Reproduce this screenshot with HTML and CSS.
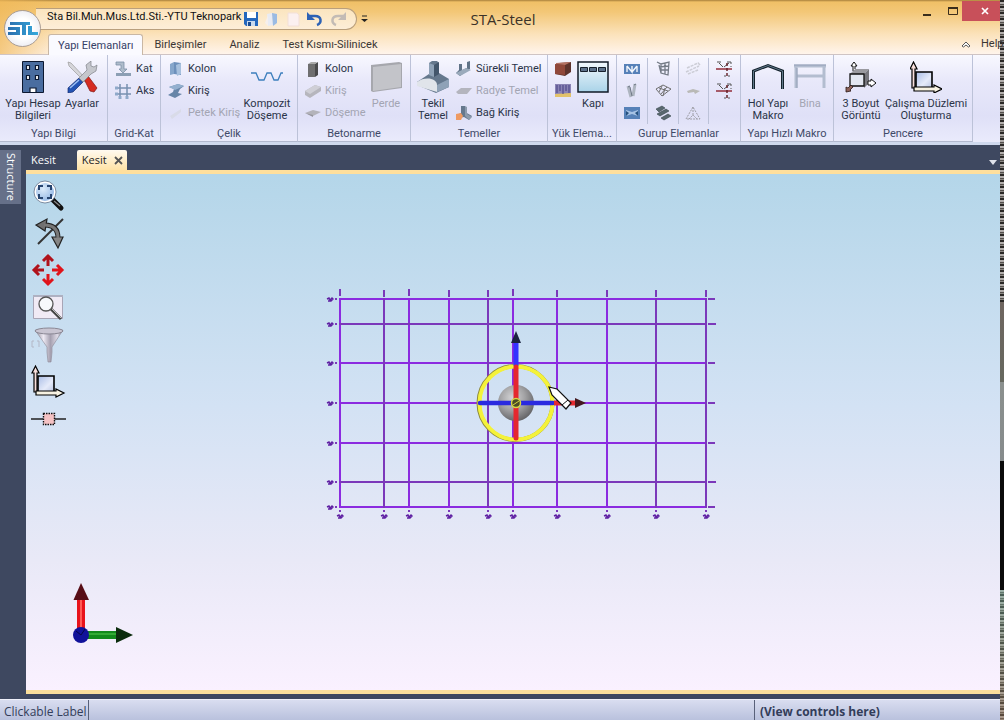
FILE: index.html
```html
<!DOCTYPE html>
<html lang="tr">
<head>
<meta charset="utf-8">
<title>STA-Steel</title>
<link rel="stylesheet" href="styles.css">
</head>
<body>
<svg class="defs" aria-hidden="true">
  <defs>
    <linearGradient id="pane" x1="0" y1="0" x2="1" y2="1"><stop offset="0" stop-color="#a9bde6"/><stop offset=".6" stop-color="#e6ebfa"/><stop offset="1" stop-color="#b9c4e2"/></linearGradient>
    <linearGradient id="logo" x1="0" y1="0" x2="1" y2="0"><stop offset="0" stop-color="#2b6fae"/><stop offset="1" stop-color="#35a9dc"/></linearGradient>
    <linearGradient id="metal" x1="0" y1="0" x2="1" y2="0"><stop offset="0" stop-color="#8b8794"/><stop offset=".3" stop-color="#eeeaf4"/><stop offset=".55" stop-color="#a5a0b0"/><stop offset=".8" stop-color="#dedae6"/><stop offset="1" stop-color="#85808c"/></linearGradient>
    <linearGradient id="door" x2="0" y2="1"><stop offset="0" stop-color="#f2f8fd"/><stop offset="1" stop-color="#a9d3e8"/></linearGradient>
    <radialGradient id="ball" cx=".4" cy=".35" r=".7"><stop offset="0" stop-color="#d4d4d6"/><stop offset=".5" stop-color="#a2a2a4"/><stop offset="1" stop-color="#5f5f62"/></radialGradient>
    <radialGradient id="lens" cx=".4" cy=".35" r=".7"><stop offset="0" stop-color="#dcebfa"/><stop offset="1" stop-color="#8db2e2"/></radialGradient>
    <g id="axes">
      <path d="M6 11h16v16H6z" fill="url(#pane)" stroke="#000" stroke-width="1.600"/>
      <path d="M2 27V8H0L3.500 1 7 8H5v19z" fill="#f7dfdc" stroke="#000" stroke-width="1.200"/>
      <path d="M4 26h20v-2l8 4-8 4v-2H4z" fill="#f7f2e2" stroke="#000" stroke-width="1.200"/>
    </g>
    <g id="section"><path d="M0 8h16" stroke="#8c1f2c" stroke-width="1.400"/><path d="M3 2l4 4M8 6l5-4M1 1h4M11 1h4" fill="none" stroke="#555"/><path d="M11 2v14" stroke="#611a20" stroke-width="1.400" stroke-dasharray="3 2"/><path d="M8 15h8M15 1v5" stroke="#555" stroke-dasharray="2 2"/></g>
  </defs>
</svg>
<div class="screen">
<div class="window">
  <header class="header">
    <button class="app-button" aria-label="STA">
      <svg width="32" height="18" viewBox="0 0 32 18"><path d="M3 2h20v3h-4v10h-4V5H3zM1 7h12v8H1v-3h8v-2H1zM21 6h4v6h6v3H21z" fill="url(#logo)"/></svg>
    </button>
    <div class="quick">
      <span class="quick-text">Sta Bil.Muh.Mus.Ltd.Sti.-YTU Teknopark</span>
      <button aria-label="Kaydet"><svg width="16" height="16"><path d="M1 1h14v14H3l-2-2z" fill="#2467bd"/><path d="M4 1h9v6H4z" fill="#fff"/><path d="M4 10h8v5H4z" fill="#c8d9ee"/><path d="M5 11h3v4H5z" fill="#194a90"/></svg></button>
      <button aria-label="Aç"><svg width="16" height="16"><path d="M3 3l5-1 1 12-5 1z" fill="#e8ebf4"/><path d="M8 2l5 1v9l-4 3z" fill="#9bbbe3"/><path d="M1 12l3-8v11z" fill="#f6efec"/></svg></button>
      <button aria-label="Yeni"><svg width="16" height="16"><path d="M3 2h9l2 2v11H3z" fill="#fbf0f0" stroke="#f2dfd8"/></svg></button>
      <button aria-label="Geri al"><svg width="18" height="16"><path d="M4 5h5c7 0 7 7 2 9" fill="none" stroke="#2d62b5" stroke-width="2.500"/><path d="M1 1v8h8z" fill="#2d62b5"/></svg></button>
      <button aria-label="Yinele"><svg width="18" height="16"><path d="M14 5H9c-7 0-7 7-2 9" fill="none" stroke="#c3bbb5" stroke-width="2.500"/><path d="M17 1v8H9z" fill="#c3bbb5"/></svg></button>
    </div>
    <button class="quick-more" aria-label="Daha fazla"><svg width="7" height="8"><path d="M1 1h5" stroke="#222"/><path d="M0 4h7L3.500 7z" fill="#222"/></svg></button>
    <h1 class="title">STA-Steel</h1>
    <div class="win-buttons">
      <button aria-label="Simge durumu"><svg width="8" height="12"><path d="M0 9h8v2H0z" fill="#3a2d1c"/></svg></button>
      <button aria-label="Ekranı kapla"><svg width="10" height="9"><path d="M.5.500h9v7h-9z" fill="none" stroke="#3a2d1c"/><path d="M0 0h10v2H0z" fill="#3a2d1c"/></svg></button>
      <button class="close" aria-label="Kapat"><svg width="8" height="8"><path d="M1 1l6 6M7 1L1 7" stroke="#fff" stroke-width="1.700"/></svg></button>
    </div>
    <nav class="tabs">
      <button class="tab active">Yapı Elemanları</button>
      <button class="tab">Birleşimler</button>
      <button class="tab">Analiz</button>
      <button class="tab">Test Kısmı-Silinicek</button>
      <button class="fold" aria-label="Şeridi daralt"><svg width="10" height="7"><path d="M1 5L5 1l4 4-1.500 1L5 4 2.500 6z" fill="#fff" stroke="#444" stroke-width=".9"/></svg></button>
      <button class="help">Help</button>
    </nav>
  </header>

  <section class="ribbon">
    <div class="group g-bilgi">
      <div class="items">
        <button class="large w58"><svg width="32" height="32"><path d="M5.500.500h21v31h-21z" fill="#4a6da0" stroke="#0c1830"/><path d="M9.500 4.500h3v4h-3zM18.500 4.500h3v4h-3zM9.500 14.500h3v4h-3zM18.500 14.500h3v4h-3zM13 27h6v4.500h-6z" fill="#fff" stroke="#0c1830" stroke-width="1.200"/></svg><span>Yapı Hesap Bilgileri</span></button>
        <button class="large w40"><svg width="32" height="32"><path d="M2 1l3 1 16 17-2 2L3 5z" fill="#d6d6da" stroke="#999" stroke-width=".7"/><path d="M18 18l4-3 9 12-3 4-4-1z" fill="#d62c22" stroke="#801512" stroke-width=".7"/><path d="M13 17l4 4L7 31l-5 1v-5z" fill="#2353b4" stroke="#152c70" stroke-width=".7"/><path d="M13 17l8-8-1-5 5-4v5l3 1 3-2-1 6-5 3-8 8z" fill="#c5c7cd" stroke="#80828a" stroke-width=".7"/><path d="M4 27l9-8" stroke="#9fc0f4" stroke-width="1.500"/></svg><span>Ayarlar</span></button>
      </div>
      <h2>Yapı Bilgi</h2>
    </div>
    <div class="group g-grid">
      <div class="items">
        <div class="stack">
          <button><svg width="17" height="16"><path d="M1 1h8v7h3l-4 4-4-4h2V4H1z" fill="#aebccb" stroke="#7c90a6" stroke-width=".8"/><path d="M1 12h15v3H1z" fill="#8c9fb4"/></svg>Kat</button>
          <button><svg width="17" height="16"><path d="M5 1v14M12 1v14M1 5h15M1 11h15" stroke="#7790b0" stroke-width="1.500"/><path d="M0 5h3M0 11h3M5 13v3M12 13v3" stroke="#8fa9ca" stroke-width="3"/></svg>Aks</button>
        </div>
      </div>
      <h2>Grid-Kat</h2>
    </div>
    <div class="group g-celik">
      <div class="items">
        <div class="stack">
          <button><svg width="16" height="16"><path d="M2 3l4-2v12l-4 1z" fill="#86a6cb"/><path d="M6 1l7 1v12l-7-1z" fill="#6d90bb"/><path d="M8 4l5-2v11l-4 2z" fill="#a7c0dd"/></svg>Kolon</button>
          <button><svg width="16" height="16"><path d="M1 4l9-3 6 2-4 3-2 4 4 1-7 4-7-3 5-3 1-3z" fill="#6785a8"/><path d="M1 4l9-3 6 2-9 4z" fill="#94b0cf"/></svg>Kiriş</button>
          <button disabled><svg width="16" height="16"><path d="M2 11L13 4v3L4 14z" fill="#d9dbe8"/></svg>Petek Kiriş</button>
        </div>
        <button class="large w52"><svg width="32" height="32"><path d="M0 12h5l3 7h5l3-7h4l3 7h4l3-7h2" fill="none" stroke="#3d7fbd" stroke-width="1.300"/></svg><span>Kompozit Döşeme</span></button>
      </div>
      <h2>Çelik</h2>
    </div>
    <div class="group g-beton">
      <div class="items">
        <div class="stack">
          <button><svg width="16" height="16"><path d="M3 3l3-2h6l-2 2z" fill="#a9a9a9"/><path d="M3 3h7v13H3z" fill="#6f6f70"/><path d="M10 3l3-2v13l-3 2z" fill="#49494b"/></svg>Kolon</button>
          <button disabled><svg width="16" height="16"><path d="M0 8l10-6 6 2v4L5 15l-5-3z" fill="#b6b6bd"/><path d="M0 8l10-6 6 2L5 11z" fill="#cfcfd6"/></svg>Kiriş</button>
          <button disabled><svg width="16" height="16"><path d="M0 8l8-3 8 2-8 4z" fill="#b3b3ba"/><path d="M0 8l8 2v2z" fill="#95959c"/></svg>Döşeme</button>
        </div>
        <button class="large w40" disabled><svg width="32" height="32"><path d="M1 4l28-3 3 1v25L3 31l-2-1z" fill="#a6a7ad"/><path d="M3 6l28-3v23L3 30z" fill="#c3c4c9"/></svg><span>Perde</span></button>
      </div>
      <h2>Betonarme</h2>
    </div>
    <div class="group g-temel">
      <div class="items">
        <button class="large w36"><svg width="32" height="32"><path d="M0 21l12-8V2l3-2h5l2 2v10l10 6v8l-13 6-19-8z" fill="#65788d"/><path d="M0 21c8-6 20-4 20 3v7L0 25z" fill="#e0e4ea"/><path d="M12 2l5 2v12l-5-2zM32 18l-12 6v7l12-5z" fill="#8fa2b7"/><path d="M17 4l5-3v12l-5 3z" fill="#43566b"/></svg><span>Tekil Temel</span></button>
        <div class="stack">
          <button><svg width="16" height="16"><path d="M3 3h3v6l5-2V1l3-1v8L4 15l-4-3 3-3z" fill="#607388"/><path d="M0 12l10-5 5 2L4 15z" fill="#9babbc"/></svg>Sürekli Temel</button>
          <button disabled><svg width="16" height="16"><path d="M0 9l5-4h11l-5 6H2z" fill="#b4b5be"/></svg>Radye Temel</button>
          <button><svg width="16" height="16"><path d="M5 1h4v6l7 4-3 4-5-3-5 1V9l2-1z" fill="#65788d"/><path d="M9 1l2 1v7l5 3-3 3-4-4z" fill="#8c9aac"/><path d="M0 9l5-1 2 3-2 4H0z" fill="#ee9a62"/></svg>Bağ Kiriş</button>
        </div>
      </div>
      <h2>Temeller</h2>
    </div>
    <div class="group g-yuk">
      <div class="items">
        <div class="stack">
          <button aria-label="Duvar yükü"><svg width="16" height="16"><path d="M0 4l4-2 12-1v10l-6 4-10-2z" fill="#5d332c"/><path d="M0 3l10 1v10L0 13z" fill="#90483a"/><path d="M1 2l15-1-6 3-9-1z" fill="#b57263"/></svg></button>
          <button aria-label="Yayılı yük"><svg width="16" height="16"><path d="M0 1h16v13H0z" fill="#8a83b4"/><path d="M0 11l16-1v4H0z" fill="#e2c26a"/><path d="M2 2v8M5 2v6M8 2v9M11 2v6M14 2v8" stroke="#453e83"/></svg></button>
        </div>
        <button class="large w32"><svg width="32" height="32"><path d="M1 1h30v30H1z" fill="url(#door)" stroke="#111a26" stroke-width="1.500"/><path d="M3.500 6.500h7v4h-7zM12.500 6.500h7v4h-7zM21.500 6.500h7v4h-7z" fill="#5c7089" stroke="#17202c"/></svg><span>Kapı</span></button>
      </div>
      <h2>Yük Elema...</h2>
    </div>
    <div class="group g-gurup">
      <div class="items columns">
        <div class="stack">
          <button aria-label="Makas"><svg width="16" height="16"><path d="M0 3h16v10H0z" fill="#5681b8"/><path d="M3 5v6M3 5l5 6V5M13 5v6M13 5l-5 6" fill="none" stroke="#f2f6fc" stroke-width="1.400"/></svg></button>
          <button aria-label="Çapraz"><svg width="16" height="16"><path d="M4 3l3 11M11 1L9 13" stroke="#aeb5c0" stroke-width="3" fill="none"/><path d="M6 4l2 9M4 4l2-1M10 2l2-1" stroke="#6d7683" stroke-width="1" fill="none"/></svg></button>
          <button aria-label="Kiriş grubu"><svg width="16" height="16"><path d="M0 2h16v12H0z" fill="#5681b8"/><path d="M2 5l6 2 6-2v6l-6-2-6 2z" fill="#a6c2e4"/><path d="M2 6l3 2-3 3M14 6l-3 2 3 3" fill="#26517f"/></svg></button>
        </div>
        <div class="stack">
          <button aria-label="Cephe"><svg width="16" height="16"><path d="M2 1l4 2 8-2-1 13-7-2-2-8M6 3v9M10 2v11M4 6l10-1M5 9h9" fill="none" stroke="#747b86" stroke-width="1.300"/></svg></button>
          <button aria-label="Çatı"><svg width="16" height="16"><path d="M1 6l7-4 8 4-9 7zM4 5l9 3M7 3l-3 6M12 4L6 11M10 5l-2 8" fill="none" stroke="#6f6f6f"/></svg></button>
          <button aria-label="Aşık"><svg width="16" height="16"><path d="M1 4l6-3 3 2-6 4zM2 9l9-5 3 2-9 5zM6 13l7-4 3 2-7 4z" fill="#59686f" stroke="#38464c" stroke-width=".6"/></svg></button>
        </div>
        <div class="stack">
          <button aria-label="Kuşak" disabled><svg width="16" height="16"><path d="M2 7l11-5 2 2M1 11l13-6M3 13l10-4" stroke="#cccdd6" stroke-width="1.500" stroke-dasharray="3 1" fill="none"/></svg></button>
          <button aria-label="Mahya" disabled><svg width="16" height="16"><path d="M2 8l6-2 7 2-5 3-1-2-6 1z" fill="#b9b9b6"/></svg></button>
          <button aria-label="Üçgen" disabled><svg width="16" height="16"><path d="M8 2L1 14h14zM8 2v8M4 14l4-4 4 4" fill="none" stroke="#9c9ca4" stroke-dasharray="2 1"/></svg></button>
        </div>
        <div class="stack">
          <button aria-label="Kesit 1"><svg width="17" height="16"><use href="#section"/></svg></button>
          <button aria-label="Kesit 2"><svg width="17" height="16"><use href="#section"/></svg></button>
        </div>
      </div>
      <h2>Gurup Elemanlar</h2>
    </div>
    <div class="group g-makro">
      <div class="items">
        <button class="large w46"><svg width="32" height="32"><path d="M1.500 28V10L16 4.500 30.500 10v18" fill="none" stroke="#14222c" stroke-width="3"/><path d="M1.500 28V10L16 4.500 30.500 10v18" fill="none" stroke="#60788a" stroke-width="1"/></svg><span>Hol Yapı Makro</span></button>
        <button class="large w38" disabled><svg width="32" height="32"><path d="M2 5v22M30 5v22M0 5h32M2 15h28" fill="none" stroke="#b3bdd0" stroke-width="3"/><path d="M0 4h32M3 7v20" stroke="#8c98b0" stroke-width=".8"/></svg><span>Bina</span></button>
      </div>
      <h2>Yapı Hızlı Makro</h2>
    </div>
    <div class="group g-pencere">
      <div class="items">
        <button class="large w46"><svg width="32" height="32"><path d="M5 13l5-5h14l-5 5z" fill="#9a9a9f"/><path d="M19 13l5-5v14l-5 5z" fill="#77777d"/><path d="M5 13h14v12H5z" fill="#e3e7f1" stroke="#111" stroke-width="1.300"/><path d="M8 10V5H6l3-4 3 4h-2v3M23 20h3v-2l5 4-5 4v-2h-3z" fill="#fff" stroke="#111"/><path d="M6 24l-3 3-2-1v5l5-1-1-1 3-3z" fill="#8c625a" stroke="#2c1915" stroke-width=".8"/></svg><span>3 Boyut Görüntü</span></button>
        <button class="large w84"><svg width="32" height="32"><use href="#axes"/></svg><span>Çalışma Düzlemi Oluşturma</span></button>
      </div>
      <h2>Pencere</h2>
    </div>
  </section>

  <main class="workspace">
    <aside class="side"><button>Structure</button></aside>
    <section class="docs">
      <div class="doc-tabs">
        <button class="doc">Kesit</button>
        <button class="doc current">Kesit <svg width="9" height="9"><path d="M1 1l7 7M8 1L1 8" stroke="#555" stroke-width="1.800"/></svg></button>
        <button class="doc-menu" aria-label="Belgeler"><svg width="8" height="5"><path d="M0 0h8L4 5z" fill="#dfe2ea"/></svg></button>
      </div>
      <div class="canvas">
        <svg class="scene" viewBox="26 174 974 516">
          <g fill="none" stroke="#8b2be0" stroke-width="2">
            <path d="M340 298v210M409 298v210M449 298v210M513 298v210M557 298v210M607 298v210"/>
            <path d="M339 299h368M339 363h368M339 403h368M339 443h368M339 507h368"/>
          </g>
          <g fill="none" stroke="#7b38ba" stroke-width="2">
            <path d="M384 298v210M488 298v210M656 298v210M706 298v210M339 324h368M339 482h368"/>
            <path d="M340 289v7M384 290v7M409 289v7M449 290v7M488 290v7M513 289v7M557 290v7M607 290v7M656 290v7M706 290v7"/>
            <path d="M708 299h7M708 324h8M708 363h7M708 403h7M708 443h7M708 482h8M708 507h7"/>
            <path d="M335 299h2M335 324h2M335 363h2M335 403h2M335 443h2M335 482h2M335 507h2"/>
            <path d="M340 510v2M384 510v2M409 510v2M449 510v2M488 510v2M513 510v2M557 510v2M607 510v2M656 510v2M706 510v2"/>
          </g>
          <defs><path id="mark" d="M-3 0l2-1 1 2 2-2 1 1-2 2-3 0" fill="none" stroke="#5e1fa2" stroke-width="1.400"/></defs>
          <use href="#mark" x="330" y="299"/><use href="#mark" x="330" y="324"/><use href="#mark" x="330" y="363"/><use href="#mark" x="330" y="403"/><use href="#mark" x="330" y="443"/><use href="#mark" x="330" y="482"/><use href="#mark" x="330" y="507"/>
          <use href="#mark" x="340" y="516"/><use href="#mark" x="384" y="516"/><use href="#mark" x="409" y="516"/><use href="#mark" x="449" y="516"/><use href="#mark" x="488" y="516"/><use href="#mark" x="513" y="516"/><use href="#mark" x="557" y="516"/><use href="#mark" x="607" y="516"/><use href="#mark" x="656" y="516"/><use href="#mark" x="706" y="516"/>
          <circle cx="516" cy="403" r="18" fill="url(#ball)"/>
          <circle cx="515.500" cy="403" r="37" fill="none" stroke="#8e8a3c" stroke-width="4"/>
          <circle cx="516" cy="403" r="36.500" fill="none" stroke="#f4f23a" stroke-width="4"/>
          <path d="M516 366v-24" stroke="#3333ff" stroke-width="5"/>
          <path d="M511 343l5-12 5 12z" fill="#1b2340"/>
          <path d="M516 367v71" stroke="#e5282e" stroke-width="5" stroke-linecap="round"/>
          <path d="M480 403h73" stroke="#2a2ae0" stroke-width="4.500" stroke-linecap="round"/>
          <path d="M554 403h22" stroke="#e5282e" stroke-width="5"/>
          <path d="M575 398l11 5-11 5z" fill="#44191f"/>
          <circle cx="516" cy="403" r="4.500" fill="#4b4b26" stroke="#d9d840" stroke-width="1.500"/>
          <path d="M513 405l6-4" stroke="#d9d840"/>
          <path d="M549 387l8 2 14 14-5 6-14-14z" fill="#fff" stroke="#111" stroke-width="1.200"/>
          <path d="M568 400l-6 5" stroke="#111"/>
        </svg>
        <div class="tools">
          <button aria-label="Tümünü göster"><svg width="32" height="32"><path d="M20 19l9 9" stroke="#111" stroke-width="5" stroke-linecap="round"/><path d="M22 21l6 5" stroke="#888" stroke-width="1.300"/><circle cx="13" cy="12" r="10" fill="url(#lens)" stroke="#fff" stroke-width="2"/><circle cx="13" cy="12" r="11" fill="none" stroke="#62718a" stroke-width=".8"/><path d="M7 10V6h4M15 6h4v4M19 14v4h-4M11 18H7v-4" fill="none" stroke="#27446f" stroke-width="2"/></svg></button>
          <button aria-label="Döndür"><svg width="32" height="32"><path d="M6 27L31 2" stroke="#333" stroke-width="2"/><path d="M13 8c8 0 13 4 13 13" fill="none" stroke="#222" stroke-width="5"/><path d="M4 8l11-6-2 12z" fill="#707070" stroke="#222" stroke-width="1.200"/><path d="M20 20h11l-5 11z" fill="#858585" stroke="#222" stroke-width="1.200"/><path d="M12 8c9 0 14 4 14 13" fill="none" stroke="#777" stroke-width="3"/></svg></button>
          <button aria-label="Kaydır"><svg width="32" height="32"><path d="M16 12V2M11 7l5-5 5 5M12 16H2M7 11l-5 5 5 5" fill="none" stroke="#b0121b" stroke-width="3"/><path d="M16 20v10M11 25l5 5 5-5M20 16h10M25 11l5 5-5 5" fill="none" stroke="#e0141b" stroke-width="3"/></svg></button>
          <button aria-label="Pencere yakınlaştır"><svg width="32" height="32"><path d="M1.500 4.500h29v23h-29z" fill="#f0eaf5" stroke="#a8a5b6"/><path d="M1 4h30v2H1z" fill="#aeb1c2"/><path d="M19 18l10 10" stroke="#444" stroke-width="3"/><path d="M20 18l9 9" stroke="#bbb"/><circle cx="14" cy="13" r="7" fill="#f7f9fc" stroke="#555" stroke-width="1.300"/></svg></button>
          <button aria-label="Filtre"><svg width="32" height="34"><path d="M3 2h28L20 19v5l-1 10h-3l-1-10v-5z" fill="url(#metal)" stroke="#8a8794" stroke-width=".6"/><ellipse cx="17" cy="3" rx="14" ry="3" fill="#c9c5d2" stroke="#8a8794"/><path d="M2 13H0v6h2M5 13h2v6" fill="none" stroke="#b3b7c6"/></svg></button>
          <button aria-label="Çalışma düzlemi"><svg width="32" height="32"><use href="#axes"/></svg></button>
          <button aria-label="Düğüm"><svg width="34" height="32"><path d="M-1 17h12M22 17h12" stroke="#222" stroke-width="1.500"/><path d="M11.500 11.500h11v11h-11z" fill="#f5c2c4" stroke="#111" stroke-width="1.400" stroke-dasharray="1.500 1"/></svg></button>
        </div>
        <svg class="triad" width="60" height="62" viewBox="0 0 60 62">
          <path d="M9 49V16" stroke="#e8131b" stroke-width="8"/><path d="M9 49V16" stroke="#ff5a55" stroke-width="2"/><path d="M1.500 17L9 0l8 17z" fill="#570d16"/>
          <path d="M12 52h32" stroke="#128a1c" stroke-width="8"/><path d="M12 51h32" stroke="#33ab35" stroke-width="2"/><path d="M44 44l17 8-17 8z" fill="#0b2c0d"/>
          <circle cx="9" cy="52" r="8" fill="#11129a"/><path d="M4 48l5 4 4-6" stroke="#070745" fill="none"/>
        </svg>
      </div>
    </section>
  </main>

  <footer class="status">
    <span class="status-left">Clickable Label</span>
    <strong class="status-right">(View controls here)</strong>
  </footer>
</div>
<div class="edge"></div>
</div>
</body>
</html>
```
FILE: styles.css
```css
* { box-sizing: border-box; }
body {
  margin: 0;
  font-family: "Open Sans", "Noto Sans", sans-serif;
  font-size: 11px;
  line-height: 12px;
  color: #2b3448;
}
.defs { position: absolute; width: 0; height: 0; }
button {
  margin: 0;
  padding: 0;
  border: 0;
  background: none;
  font: inherit;
  color: inherit;
}
button:disabled { color: #a3a5b3; }
svg { display: block; flex: none; }
h1, h2 { margin: 0; font-weight: normal; }

.screen { display: flex; height: 100vh; overflow: hidden; }
.window { flex: 1; min-width: 0; display: flex; flex-direction: column; background: #3e4860; }
.edge {
  width: 4px;
  background:
    linear-gradient(transparent 42%, #6f6660 42%, #66685f 53%, #8b908e 53%, #868b8c 64%, #0a0a0a 64%, #0a0a0a 82%, transparent 82%),
    linear-gradient(transparent 82%, rgba(120, 180, 160, .4) 82%, rgba(160, 120, 90, .4)),
    repeating-linear-gradient(#2a2826 0 2px, #b2aeac 2px 4px, #55514e 4px 5px, #8c8884 5px 6px);
}

/* Title bar and ribbon tabs */
.header {
  position: relative;
  flex: none;
  display: grid;
  grid-template-columns: 357px auto 1fr auto;
  grid-template-rows: 34px 21px;
  background:
    linear-gradient(to right, rgba(240, 184, 88, .7), transparent 60px),
    linear-gradient(#a8803c 0, #f0c067 2px, #f3c777 12px, #fbe2ba 34px, #fff5ee 55px);
}
.app-button {
  position: absolute;
  left: 4px;
  top: 10px;
  width: 37px;
  height: 37px;
  display: grid;
  place-items: center;
  border: 1px solid #a89c94;
  border-radius: 50%;
  background: radial-gradient(#fff 40%, #dfe0ea);
}
.quick {
  display: flex;
  align-items: center;
  gap: 5px;
  height: 22px;
  margin: 8px 0 0 36px;
  padding-left: 11px;
  border: 1px solid #b99f7c;
  border-left: 0;
  border-radius: 0 11px 11px 0;
  background: linear-gradient(#fbe5bf, #fdeed8);
  color: #111;
}
.quick-text {
  width: 191px;
  padding-bottom: 4px;
  font-family: Roboto, "Open Sans", sans-serif;
  white-space: nowrap;
}
.quick-more { align-self: start; margin: 15px 0 0 4px; }
.title {
  position: absolute;
  left: 0;
  right: 0;
  margin-top: 10px;
  padding-left: 6px;
  font-size: 15px;
  line-height: 18px;
  text-align: center;
  color: #3b3228;
}
.win-buttons { grid-column: 4; display: flex; align-items: start; gap: 17px; height: 20px; margin-top: 1px; }
.win-buttons button { display: grid; place-items: center; height: 20px; }
.win-buttons .close { width: 38px; margin-left: -13px; padding-left: 8px; background: #c8505a; }
.win-buttons .close { margin-left: -13px; }
.tabs {
  grid-column: 1 / -1;
  display: flex;
  padding-left: 48px;
  border-bottom: 1px solid #cfc4c4;
  font-family: Roboto, "Open Sans", sans-serif;
}
.tab { padding: 2px 12px 0 11px; white-space: nowrap; color: #3a3634; }
.tab.active {
  margin-bottom: -1px;
  padding: 1px 9px 0;
  border: 1px solid #c9b7a4;
  border-bottom: 0;
  border-radius: 3px 3px 0 0;
  background: #fafaff;
  color: #354066;
}
.fold { margin-left: auto; }
.help { width: 29px; padding-left: 10px; text-align: left; color: #3a3634; }

/* Ribbon */
.ribbon {
  flex: none;
  display: flex;
  height: 90px;
  border-bottom: 3px solid #cfd9ee;
  background: linear-gradient(#f8f8ff, #e8e8fa 30%, #dfe0f7 70%, #eaebfc);
  font-family: Roboto, "Open Sans", sans-serif;
}
.group {
  flex: none;
  display: flex;
  flex-direction: column;
  border-right: 1px solid #bcc2d8;
  border-bottom: 1px solid #b2b9cf;
}
.group h2 {
  margin-top: auto;
  font-size: 11px;
  line-height: 14px;
  text-align: center;
  white-space: nowrap;
  color: #3f4a68;
}
.items { display: flex; align-items: start; padding: 3px 4px 0; }
.stack { display: grid; grid-auto-rows: 22px; }
.stack button { display: flex; align-items: center; gap: 4px; line-height: 14px; white-space: nowrap; }
.large { display: flex; flex-direction: column; align-items: center; gap: 5px; padding-top: 3px; text-align: center; }
.w32 { width: 32px; }
.w36 { width: 36px; }
.w38 { width: 38px; }
.w40 { width: 40px; }
.w46 { width: 46px; }
.w52 { width: 52px; }
.w58 { width: 58px; }
.w84 { width: 84px; }
.g-bilgi { width: 108px; }
.g-grid { width: 53px; }
.g-celik { width: 137px; }
.g-beton { width: 113px; }
.g-temel { width: 137px; }
.g-yuk { width: 69px; }
.g-gurup { width: 124px; }
.g-makro { width: 93px; }
.g-pencere { width: 139px; }
.g-grid .items, .g-celik .items, .g-beton .items, .g-yuk .items { padding-left: 7px; }
.g-celik .large, .g-beton .large { margin-left: auto; }
.g-temel .items { gap: 5px; }
.g-yuk .items { gap: 6px; }
.g-gurup .columns { padding: 3px 0 0; }
.columns .stack { width: 31px; height: 66px; justify-content: center; border-right: 1px solid #bcc2d8; }
.columns .stack:last-child { border-right: 0; }

/* Documents */
.workspace { flex: 1; min-height: 0; display: flex; padding-bottom: 5px; }
.side { width: 26px; flex: none; padding-top: 5px; }
.side button {
  width: 21px;
  height: 54px;
  writing-mode: vertical-rl;
  background: #667089;
  color: #fff;
}
.docs { flex: 1; min-width: 0; display: flex; flex-direction: column; }
.doc-tabs { display: flex; align-items: end; height: 25px; padding-left: 5px; }
.doc { height: 20px; margin-right: 21px; color: #fff; }
.doc.current {
  display: flex;
  align-items: center;
  gap: 7px;
  margin: 0;
  padding: 0 4px 0 5px;
  border-radius: 2px 2px 0 0;
  background: linear-gradient(#fffaf0, #ffe3a6);
  color: #222;
}
.doc-menu { margin: 0 3px 5px auto; }
.canvas {
  position: relative;
  flex: 1;
  min-height: 0;
  border-top: 4px solid #ffdf9c;
  border-bottom: 4px solid #fbdf9c;
  background: linear-gradient(#b4d6e9, #d3e2f4 45%, #e9e9f7 75%, #faf1ff);
}
.scene { position: absolute; inset: 0; width: 100%; height: 100%; }
.tools { position: relative; display: grid; gap: 5px; width: 34px; margin: 6px 0 0 6px; grid-auto-rows: 32px; }
.tools svg { overflow: visible; }
.triad { position: absolute; left: 46px; bottom: 45px; overflow: visible; }

/* Status bar */
.status {
  flex: none;
  display: flex;
  align-items: stretch;
  height: 21px;
  border-top: 1px solid #eef0fa;
  background: linear-gradient(#d9ddf0, #b9c1dd);
  font-size: 12px;
  line-height: 24px;
  color: #333d5a;
  overflow: hidden;
}
.status-left { padding: 0 1px 0 4px; border-right: 1px solid #59617a; }
.status-right { margin-left: auto; width: 246px; padding-left: 5px; border-left: 1px solid #59617a; }
```
